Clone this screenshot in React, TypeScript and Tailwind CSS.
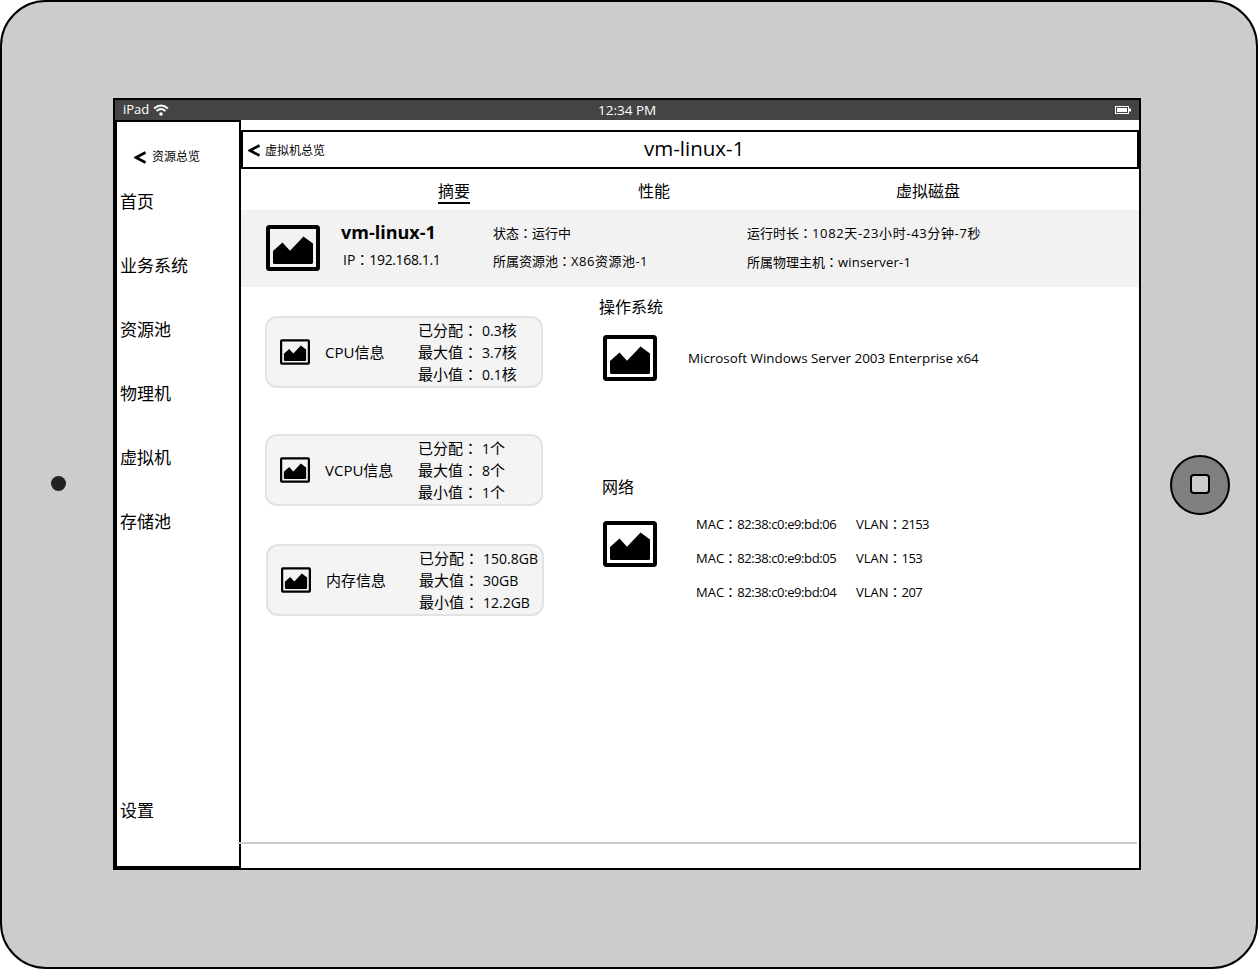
import React from "react";

const fontStack = { fontFamily: '"Open Sans", "Noto Sans CJK SC", sans-serif' };

// placeholder picture used all over the wireframe
const ImageIcon = ({ className }: { className: string }) => (
  <svg viewBox="0 0 54 46" className={className}>
    <rect x="2" y="2" width="50" height="42" rx="1.5" fill="none" stroke="#000" strokeWidth="4" />
    <path
      d="M7 26 L16.5 17.5 L24 25.7 L37.5 11.5 L47 18.5 L47 37.5 Q47 39 45.500 39 L8.500 39 Q7 39 7 37.500 Z"
      fill="#000"
    />
  </svg>
);

const Chevron = ({ className }: { className: string }) => (
  <svg viewBox="0 0 12 13" className={className}>
    <path d="M11.500 1.500 L2 6.500 L11.500 11.500" fill="none" stroke="#000" strokeWidth="2.600" />
  </svg>
);

// the TC face keeps the full width colon centred, like the reference
const Colon = () => <span className="font-['Noto_Sans_CJK_TC']">：</span>;

const InfoCard = ({
  label,
  rows,
  unit,
  className,
}: {
  label: string;
  rows: string[];
  unit: string;
  className: string;
}) => {
  const names = ["已分配", "最大值", "最小值"];
  return (
    <div className={`flex h-[72px] w-[278px] items-center rounded-[12px] border-2 border-[#e3e3e3] bg-[#f4f4f4] pl-[13px] ${className}`}>
      <ImageIcon className="h-[26px] w-[30px] shrink-0" />
      <div className="ml-[15px] w-[93px] shrink-0 text-[15px]">{label}</div>
      <div className="flex flex-col text-[15px] leading-[22px]">
        {names.map((name, i) => (
          <div key={name} className="flex h-[22px] items-center whitespace-nowrap">
            <span className="w-[64px]">
              {name}
              <Colon />
            </span>
            <span>
              <span className="text-[14px]">{rows[i]}</span>
              {unit}
            </span>
          </div>
        ))}
      </div>
    </div>
  );
};

const menu = ["首页", "业务系统", "资源池", "物理机", "虚拟机", "存储池"];

const networks = [
  { mac: "82:38:c0:e9:bd:06", vlan: "2153" },
  { mac: "82:38:c0:e9:bd:05", vlan: "153" },
  { mac: "82:38:c0:e9:bd:04", vlan: "207" },
];

export default function App() {
  return (
    <div style={fontStack} className="h-[969px] w-[1258px] overflow-hidden bg-white text-black">
      <div className="flex h-[969px] w-[1258px] items-start rounded-[46px] border-2 border-black bg-[#cccccc]">
        {/* left camera dot */}
        <div className="flex h-full w-[111px] shrink-0 items-center pb-[3px] pl-[49px]">
          <div className="h-[15px] w-[15px] rounded-full bg-[#222]" />
        </div>

        {/* screen */}
        <div className="mt-[96px] flex h-[772px] w-[1028px] shrink-0 flex-col border-2 border-black bg-white">
          <div className="flex h-[20px] shrink-0 items-center bg-[#444444] px-[8px] text-[13.5px] text-white">
            <div className="flex w-[475px] items-center">
              <span className="text-[13px]">iPad</span>
              <svg viewBox="0 0 16 12" className="ml-[4px] h-[12px] w-[16px]">
                <path d="M1 4.500 Q8 -1.500 15 4.500" fill="none" stroke="#fff" strokeWidth="2" />
                <path d="M3.500 7 Q8 3 12.500 7" fill="none" stroke="#fff" strokeWidth="2" />
                <circle cx="8" cy="10" r="1.800" fill="#fff" />
              </svg>
            </div>
            <span className="whitespace-nowrap">12:34 PM</span>
            <svg viewBox="0 0 16 8" className="ml-auto h-[8px] w-[16px]">
              <rect x="0.500" y="0.500" width="13" height="7" fill="none" stroke="#fff" />
              <rect x="2" y="2" width="10" height="4" fill="#fff" />
              <rect x="14" y="2.500" width="2" height="3" fill="#fff" />
            </svg>
          </div>

          <div className="flex min-h-0 flex-1">
            {/* sidebar */}
            <div className="flex w-[126px] shrink-0 flex-col border-2 border-black bg-white">
              <div className="flex h-[48px] shrink-0 items-end pb-[6px] pl-[17px]">
                <Chevron className="h-[13px] w-[12px]" />
                <span className="ml-[6px] text-[12px] leading-[14px]">资源总览</span>
              </div>
              {menu.map((item) => (
                <div key={item} className="flex h-[64px] shrink-0 items-center pl-[3px] text-[17px]">
                  {item}
                </div>
              ))}
              <div className="mb-[23px] mt-auto flex h-[64px] items-center pl-[3px] text-[17px]">设置</div>
            </div>

            {/* main */}
            <div className="flex min-w-0 flex-1 flex-col">
              <div className="mt-[10px] flex h-[39px] shrink-0 items-center border-2 border-black pl-[5px]">
                <Chevron className="mt-[2px] h-[13px] w-[12px]" />
                <span className="ml-[5px] mt-[3px] w-[60px] whitespace-nowrap text-[12px]">虚拟机总览</span>
                <span className="ml-[319px] whitespace-nowrap pb-[3px] text-[20.5px]">vm-linux-1</span>
              </div>

              <div className="flex h-[41px] shrink-0 items-start pl-[197px] pt-[11px] text-[16px] leading-[22px]">
                <span className="border-b-2 border-black">摘要</span>
                <span className="ml-[168px]">性能</span>
                <span className="ml-[226px]">虚拟磁盘</span>
              </div>

              <div className="flex h-[77px] shrink-0 items-center bg-[#f2f2f2] pb-[2px] pl-[25px]">
                <ImageIcon className="h-[46px] w-[54px] shrink-0" />
                <div className="mb-[6px] ml-[21px] w-[152px] shrink-0">
                  <div className="text-[18px] font-bold leading-[24px]">vm-linux-1</div>
                  <div className="ml-[2px] mt-[5px] text-[14px] leading-[20px]">
                    IP
                    <Colon />
                    <span className="tracking-[-0.36px]">192.168.1.1</span>
                  </div>
                </div>
                <div className="mb-[2px] w-[254px] shrink-0 text-[13px] leading-[20px]">
                  <div>
                    状态
                    <Colon />
                    运行中
                  </div>
                  <div className="mt-[8px]">
                    所属资源池
                    <Colon />
                    <span className="tracking-[0.5px]">X86资源池-1</span>
                  </div>
                </div>
                <div className="text-[13px] leading-[20px]">
                  <div>
                    运行时长
                    <Colon />
                    <span className="tracking-[0.65px]">1082天-23小时-43分钟-7秒</span>
                  </div>
                  <div className="mt-[9px]">
                    所属物理主机
                    <Colon />
                    <span className="tracking-[0.2px]">winserver-1</span>
                  </div>
                </div>
              </div>

              <div className="flex min-h-0 flex-1">
                <div className="w-[358px] shrink-0 pl-[24px] pt-[29px]">
                  <InfoCard label="CPU信息" rows={["0.3", "3.7", "0.1"]} unit="核" className="" />
                  <InfoCard label="VCPU信息" rows={["1", "8", "1"]} unit="个" className="mt-[46px]" />
                  <InfoCard label="内存信息" rows={["150.8GB", "30GB", "12.2GB"]} unit="" className="ml-[1px] mt-[38px]" />
                </div>
                <div className="flex-1 pt-[8px]">
                  <div className="text-[16px] leading-[24px]">操作系统</div>
                  <div className="ml-[4px] mt-[16px] flex items-center">
                    <ImageIcon className="h-[46px] w-[54px] shrink-0" />
                    <span className="ml-[31px] whitespace-nowrap text-[13.4px]">
                      Microsoft Windows Server 2003 Enterprise x64
                    </span>
                  </div>
                  <div className="ml-[3px] mt-[94px] text-[16px] leading-[24px]">网络</div>
                  <div className="ml-[4px] mt-[22px] flex items-start">
                    <ImageIcon className="h-[46px] w-[54px] shrink-0" />
                    <div className="-mt-[7px] ml-[39px] flex flex-col gap-[14px] text-[13px] leading-[20px]">
                      {networks.map((n) => (
                        <div key={n.mac} className="flex h-[20px] whitespace-nowrap">
                          <span className="w-[160px]">
                            MAC
                            <Colon />
                            <span className="tracking-[-0.4px]">{n.mac}</span>
                          </span>
                          <span>
                            VLAN
                            <Colon />
                            <span className="tracking-[-0.6px]">{n.vlan}</span>
                          </span>
                        </div>
                      ))}
                    </div>
                  </div>
                </div>
              </div>

              <div className="relative z-10 -ml-[3px] mb-[24px] mr-[2px] h-[2px] shrink-0 bg-[#cccccc]" />
            </div>
          </div>
        </div>

        {/* home button */}
        <div className="flex h-full flex-1 items-center pl-[29px]">
          <div className="flex h-[60px] w-[60px] items-center justify-center rounded-full border-2 border-black bg-[#808080] pb-[1px] pr-[1px]">
            <div className="h-[20px] w-[20px] rounded-[4px] border-2 border-black bg-[#cccccc]" />
          </div>
        </div>
      </div>
    </div>
  );
}
